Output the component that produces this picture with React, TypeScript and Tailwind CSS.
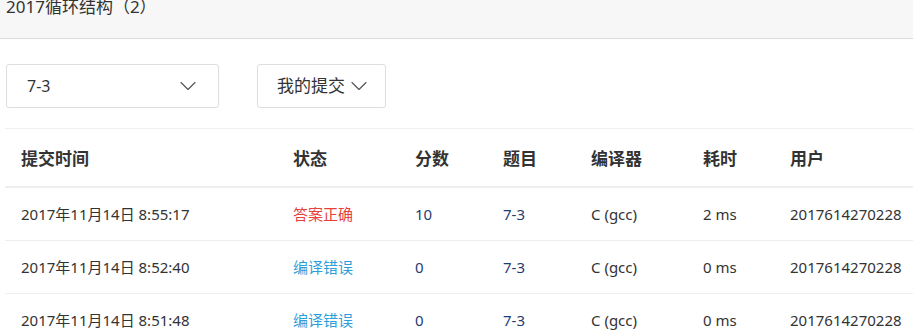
import { ChevronDown } from 'lucide-react'

const rows = [
  { time: '2017年11月14日 8:55:17', status: '答案正确', ok: true, score: '10', ms: '2 ms' },
  { time: '2017年11月14日 8:52:40', status: '编译错误', ok: false, score: '0', ms: '0 ms' },
  { time: '2017年11月14日 8:51:48', status: '编译错误', ok: false, score: '0', ms: '0 ms' },
]

const cols = ['w-[288px] pl-4', 'w-[122px]', 'w-[88px]', 'w-[88px]', 'w-[112px]', 'w-[87px]', 'flex-1']

const App = () => {
  return (
    <div className="w-[913px] h-[330px] overflow-hidden bg-white text-[#333]" style={{ fontFamily: '"Noto Sans", "Noto Sans CJK SC", sans-serif' }}>
      <div className="h-[39px] bg-[#f7f7f7] border-b border-[#dcdcdc] pl-[6px] flex flex-col">
        <div className="text-[17px] leading-[22px] -mt-[4px]">2017循环结构（2）</div>
      </div>

      <div className="flex gap-[38px] pl-[6px] mt-[25px]">
        <div className="w-[213px] h-[44px] border border-[#dedede] rounded-[3px] flex items-center justify-between pl-[20px] pr-[16px] text-[16px]">
          <span>7-3</span>
          <ChevronDown className="w-[28px] h-[28px] text-[#555]" strokeWidth={1} />
        </div>
        <div className="w-[129px] h-[44px] border border-[#dedede] rounded-[3px] flex items-center pl-[19px] gap-0 text-[17px]">
          <span>我的提交</span>
          <ChevronDown className="w-[28px] h-[28px] text-[#555]" strokeWidth={1} />
        </div>
      </div>

      <div className="ml-[5px] mt-[20px] border-t border-[#f0f0f0]">
        <div className="flex items-center h-[59px] pt-[2px] border-b-2 border-[#eeeeee] font-bold text-[17px]">
          {['提交时间', '状态', '分数', '题目', '编译器', '耗时', '用户'].map((h, i) => (
            <div key={h} className={cols[i]}>{h}</div>
          ))}
        </div>
        {rows.map((r) => (
          <div key={r.time} className="flex items-center h-[53px] border-b border-[#eeeeee] text-[15px]">
            <div className={cols[0]}>{r.time}</div>
            <div className={`${cols[1]} ${r.ok ? 'text-[#e8403a]' : 'text-[#2d9fd8]'}`}>{r.status}</div>
            <div className={`${cols[2]} text-[#1f3d73]`}>{r.score}</div>
            <div className={`${cols[3]} text-[#1f3d73]`}>7-3</div>
            <div className={cols[4]}>C (gcc)</div>
            <div className={cols[5]}>{r.ms}</div>
            <div className={cols[6]}>2017614270228</div>
          </div>
        ))}
      </div>
    </div>
  )
}

export default App
